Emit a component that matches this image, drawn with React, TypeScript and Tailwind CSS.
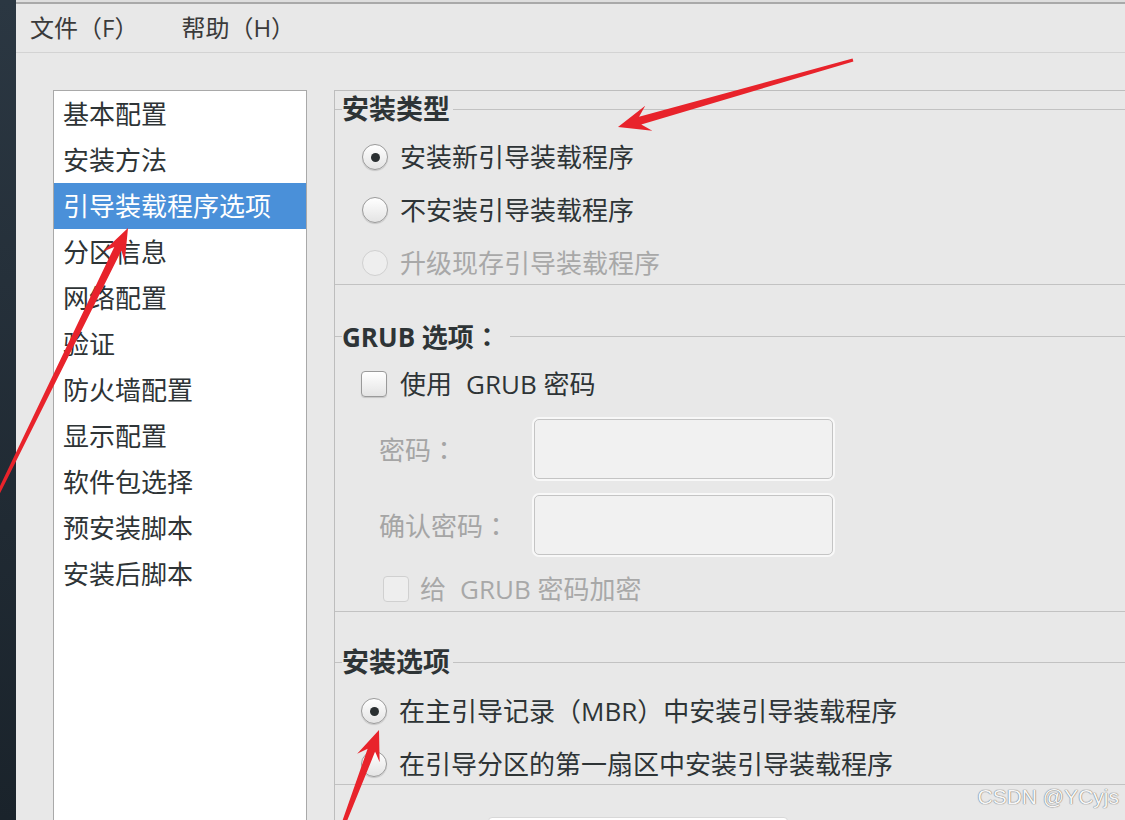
// Kickstart-style config window: section list on the left, boot loader options on the right
const menus = ["文件（F）", "帮助（H）"];

const sections = [
  "基本配置",
  "安装方法",
  "引导装载程序选项",
  "分区信息",
  "网络配置",
  "验证",
  "防火墙配置",
  "显示配置",
  "软件包选择",
  "预安装脚本",
  "安装后脚本",
];

function Radio({ checked = false, disabled = false }: { checked?: boolean; disabled?: boolean }) {
  return (
    <span
      className={`flex h-[26px] w-[26px] shrink-0 items-center justify-center rounded-full border ${
        disabled
          ? "border-[#d0d0d0] bg-[#eeeeee]"
          : "border-[#9a9a9a] bg-gradient-to-b from-white to-[#e4e4e4] shadow-[0_1px_1px_rgba(0,0,0,0.15)]"
      }`}
    >
      {checked && <span className="h-[9px] w-[9px] rounded-full bg-[#2a2f31]" />}
    </span>
  );
}

function Check({ disabled = false }: { disabled?: boolean }) {
  return (
    <span
      className={`block h-[26px] w-[26px] shrink-0 rounded-[4px] border ${
        disabled
          ? "border-[#d0d0d0] bg-[#eeeeee]"
          : "border-[#9a9a9a] bg-gradient-to-b from-white to-[#e4e4e4] shadow-[0_1px_1px_rgba(0,0,0,0.15)]"
      }`}
    />
  );
}

function Option({ label, checked, disabled }: { label: string; checked?: boolean; disabled?: boolean }) {
  return (
    <div className={`flex h-[40px] items-center gap-[12px] ${disabled ? "text-[#a8a8a8]" : ""}`}>
      <Radio checked={checked} disabled={disabled} />
      <span>{label}</span>
    </div>
  );
}

// centred full-width colon, as the GTK font draws it
function Colon() {
  return <span className="font-['Noto_Sans_CJK_JP',sans-serif]">：</span>;
}

function Field({ label }: { label: string }) {
  return (
    <div className="flex items-center pl-[44px]">
      <span className="w-[155px] shrink-0 text-[#a5a5a5]">
        {label}
        <Colon />
      </span>
      <div className="h-[60px] w-[299px] rounded-[5px] border border-[#c4c4c4] bg-[#f1f1f1] shadow-[0_0_0_2px_#f8f8f8]" />
    </div>
  );
}

// tapered annotation arrow, tail -> tip
function arrow(x1: number, y1: number, x2: number, y2: number, head: number, hw: number, tailW: number, neckW: number) {
  const L = Math.hypot(x2 - x1, y2 - y1);
  const ux = (x2 - x1) / L;
  const uy = (y2 - y1) / L;
  const nx = -uy;
  const ny = ux;
  const bx = x2 - ux * head;
  const by = y2 - uy * head;
  const kx = x2 - ux * head * 0.72;
  const ky = y2 - uy * head * 0.72;
  const pts = [
    [x1 + (nx * tailW) / 2, y1 + (ny * tailW) / 2],
    [kx + (nx * neckW) / 2, ky + (ny * neckW) / 2],
    [bx + nx * hw, by + ny * hw],
    [x2, y2],
    [bx - nx * hw, by - ny * hw],
    [kx - (nx * neckW) / 2, ky - (ny * neckW) / 2],
    [x1 - (nx * tailW) / 2, y1 - (ny * tailW) / 2],
  ];
  return pts.map((p) => p.join(",")).join(" ");
}

export default function App() {
  return (
    <div className="relative flex h-[820px] w-[1125px] overflow-hidden bg-[#e8e8e8] font-['Open_Sans','Noto_Sans_CJK_SC',sans-serif] text-[26px] text-[#2e3436]">
      {/* desktop edge */}
      <div className="w-[16px] shrink-0 bg-gradient-to-b from-[#2b3742] to-[#1a232b]" />

      <div className="flex min-w-0 flex-1 flex-col bg-[#dedede] pt-[2px]">
        <div className="flex min-h-0 flex-1 flex-col border-t-2 border-[#a9a9a9] bg-[#e8e8e8]">
          {/* Menu bar */}
          <div className="flex h-[49px] shrink-0 items-center gap-[43px] border-b border-[#d3d3d3] pl-[14px] text-[24px] text-[#3a3a3a]">
            {menus.map((m) => (
              <span key={m}>{m}</span>
            ))}
          </div>

          <div className="flex min-h-0 flex-1 pl-[37px] pt-[37px]">
            {/* Section list */}
            <div className="w-[254px] shrink-0 border-x border-t border-[#a9a9a9] bg-white">
              {sections.map((s) => (
                <div
                  key={s}
                  className={`h-[46px] pl-[9px] leading-[46px] ${
                    s === "引导装载程序选项" ? "bg-[#4a90d9] text-white" : ""
                  }`}
                >
                  {s}
                </div>
              ))}
            </div>

            {/* Options pane */}
            <div className="ml-[27px] min-w-0 flex-1 border-l border-t border-[#bdbdbd] pt-[4px]">
              <fieldset className="min-w-0 border-y border-[#c2c2c2] pb-[1px] pt-[14px]">
                <legend className="ml-[7px] pr-[3px] text-[27px] font-bold leading-[28px]">安装类型</legend>
                <div className="flex flex-col gap-[13px] pl-[27px]">
                  <Option label="安装新引导装载程序" checked />
                  <Option label="不安装引导装载程序" />
                  <Option label="升级现存引导装载程序" disabled />
                </div>
              </fieldset>

              <fieldset className="mt-[37px] min-w-0 border-y border-[#c2c2c2] pb-[2px] pt-[13px]">
                <legend className="ml-[7px] pr-[10px] text-[26px] font-bold leading-[28px]">
                  GRUB 选项
                  <Colon />
                </legend>
                <div className="flex h-[40px] items-center gap-[13px] pl-[26px]">
                  <Check />
                  <span>
                    使用<span className="ml-[14px]">GRUB 密码</span>
                  </span>
                </div>
                <div className="mt-[15px] flex flex-col gap-[16px]">
                  <Field label="密码" />
                  <Field label="确认密码" />
                </div>
                <div className="mt-[14px] flex h-[40px] items-center gap-[11px] pl-[48px] text-[#a8a8a8]">
                  <Check disabled />
                  <span>
                    给<span className="ml-[14px]">GRUB 密码加密</span>
                  </span>
                </div>
              </fieldset>

              <fieldset className="mt-[36px] min-w-0 border-y border-[#c2c2c2] pt-[15px]">
                <legend className="ml-[7px] pr-[3px] text-[27px] font-bold leading-[28px]">安装选项</legend>
                <div className="flex flex-col gap-[13px] pl-[26px]">
                  <Option label="在主引导记录（MBR）中安装引导装载程序" checked />
                  <Option label="在引导分区的第一扇区中安装引导装载程序" />
                </div>
              </fieldset>

              <div className="ml-[153px] mt-[32px] h-[40px] w-[300px] rounded-[4px] border border-[#d8d8d8] bg-white" />
            </div>
          </div>
        </div>
      </div>

      {/* red annotation arrows */}
      <svg className="pointer-events-none absolute inset-0" width="1125" height="820" viewBox="0 0 1125 820">
        <g fill="#e8232b">
          <polygon points={arrow(853, 60, 618, 127, 32, 13, 3, 8)} />
          <polygon points={arrow(-6, 502, 128, 228, 32, 12, 3, 8)} />
          <polygon points={arrow(342, 828, 379, 730, 30, 12, 4, 8)} />
        </g>
      </svg>

      <span className="absolute bottom-[8px] right-[6px] font-['Liberation_Sans',sans-serif] text-[21px] text-[#f6f6f6] [text-shadow:0_0_1px_#6f6f6f,0_0_1px_#6f6f6f]">
        CSDN @YCyjs
      </span>
    </div>
  );
}
